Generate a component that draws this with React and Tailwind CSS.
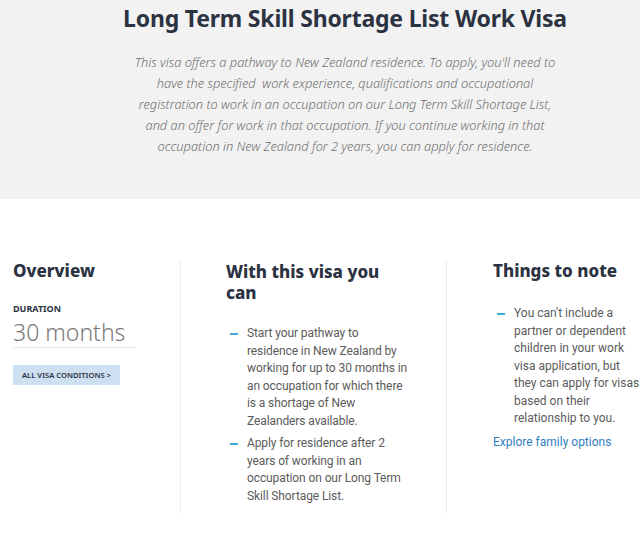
import React from "react";

function Dash() {
  return <span className="mt-[8px] mr-[9px] block h-[2px] w-[8px] shrink-0 bg-[#3eaed6]" />;
}

function BulletItem({ children }) {
  return (
    <li className="flex items-start">
      <Dash />
      <span>{children}</span>
    </li>
  );
}

export default function App() {
  return (
    <div className="min-h-[533px] w-[640px] bg-white font-['Noto_Sans',sans-serif]">
      {/* intro band */}
      <div className="h-[199px] bg-[#f2f2f2] pl-[50px] pt-[3px]">
        <h1 className="text-center text-[23px] font-bold leading-[30px] tracking-[-0.2px] text-[#2b3241]">
          Long Term Skill Shortage List Work Visa
        </h1>
        <p className="mx-auto mt-[19px] w-[430px] text-center text-[12.8px] font-light italic leading-[21px] text-[#6f6f6f]">
          This visa offers a pathway to New Zealand residence. To apply, you'll need to have the
          specified&nbsp; work experience, qualifications and occupational registration to work in an
          occupation on our Long Term Skill Shortage List, and an offer for work in that occupation.
          If you continue working in that occupation in New Zealand for 2 years, you can apply for
          residence.
        </p>
      </div>

      {/* three columns */}
      <div className="flex pt-[62px]">
        <div className="w-[181px] shrink-0 border-r border-[#ececec] pl-[13px]">
          <h2 className="text-[17px] font-extrabold leading-[20px] text-[#2b3241]">Overview</h2>
          <div className="mt-[22px] text-[9px] font-bold uppercase leading-[12px] text-[#2b3241]">
            Duration
          </div>
          <div className="mt-[3px] w-[122px] border-b border-[#e6e6e6] pb-[1px] text-[23px] font-light leading-[28px] text-[#7a7a7a]">
            30 months
          </div>
          <button className="mt-[17px] bg-[#cddff0] px-[9px] py-[5px] text-[7.6px] font-semibold uppercase leading-[10px] text-[#2b3241]">
            All visa conditions &gt;
          </button>
        </div>

        <div className="w-[266px] shrink-0 border-r border-[#ececec] pb-[8px] pl-[45px] pr-[37px]">
          <h2 className="text-[17px] font-extrabold leading-[21px] text-[#2b3241]">
            With this visa you can
          </h2>
          <ul className="mt-[22px] space-y-[5px] pl-[4px] font-['Roboto',sans-serif] text-[12px] leading-[17.5px] tracking-[-0.1px] text-[#5b5b5b]">
            <BulletItem>
              Start your pathway to residence in New Zealand by working for up to 30 months in an
              occupation for which there is a shortage of New Zealanders available.
            </BulletItem>
            <BulletItem>
              Apply for residence after 2 years of working in an occupation on our Long Term Skill
              Shortage List.
            </BulletItem>
          </ul>
        </div>

        <div className="flex-1 pl-[46px]">
          <h2 className="text-[17px] font-extrabold leading-[20px] text-[#2b3241]">Things to note</h2>
          <ul className="mt-[24px] pl-[4px] font-['Roboto',sans-serif] text-[12px] leading-[17.5px] text-[#5b5b5b]">
            <BulletItem>
              You can't include a partner or dependent children in your work visa application, but
              they can apply for visas based on their relationship to you.
            </BulletItem>
          </ul>
          <a className="mt-[6px] block font-['Roboto',sans-serif] text-[12px] leading-[17px] text-[#2f7ec0]" href="#">
            Explore family options
          </a>
        </div>
      </div>
    </div>
  );
}
